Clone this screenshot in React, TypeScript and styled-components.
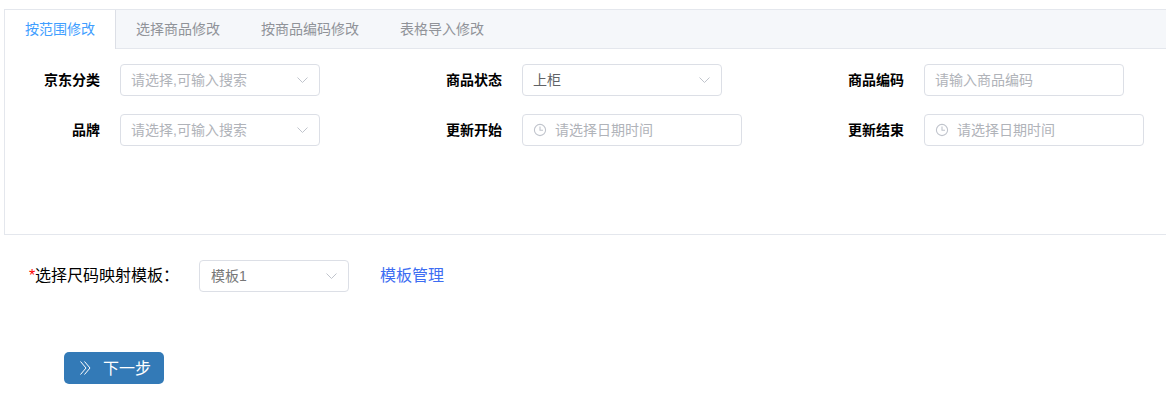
import styled, { createGlobalStyle } from "styled-components";

const GlobalStyle = createGlobalStyle`
  html, body {
    margin: 0;
    padding: 0;
    background: #fff;
    overflow: hidden;
  }
  body {
    font-family: "Liberation Sans", "Noto Sans CJK SC", sans-serif;
    font-size: 14px;
  }
`;

const Arrow = () => (
  <ArrowIcon width="11" height="6" viewBox="0 0 11 6" fill="none" stroke="currentColor" strokeWidth="1">
    <path d="M0.5 0.5L5.5 5.5L10.5 0.5" />
  </ArrowIcon>
);

const ClockIcon = () => (
  <svg width="14" height="14" viewBox="0 0 14 14" fill="none" stroke="currentColor" strokeWidth="1.1">
    <circle cx="7" cy="7" r="5.6" />
    <path d="M7 3.6V7.2H10" />
  </svg>
);

const DoubleArrow = () => (
  <svg width="11" height="14" viewBox="0 0 11 14" fill="none" stroke="currentColor" strokeWidth="1">
    <path d="M0.5 0.5L6 7L0.5 13.5M4.5 0.5L10 7L4.5 13.5" />
  </svg>
);

const tabs = ["按范围修改", "选择商品修改", "按商品编码修改", "表格导入修改"];

const App = () => (
  <Page>
    <GlobalStyle />
    <TabCard>
      <TabHeader>
        {tabs.map((tab, index) => (
          <Tab key={tab} $active={index === 0}>
            {tab}
          </Tab>
        ))}
      </TabHeader>
      <FormGrid>
        <FormItem>
          <Label>京东分类</Label>
          <Field>
            <Placeholder>请选择,可输入搜索</Placeholder>
            <Arrow />
          </Field>
        </FormItem>
        <FormItem>
          <Label>商品状态</Label>
          <Field>
            <Value>上柜</Value>
            <Arrow />
          </Field>
        </FormItem>
        <FormItem>
          <Label>商品编码</Label>
          <Field>
            <Placeholder>请输入商品编码</Placeholder>
          </Field>
        </FormItem>
        <FormItem>
          <Label>品牌</Label>
          <Field>
            <Placeholder>请选择,可输入搜索</Placeholder>
            <Arrow />
          </Field>
        </FormItem>
        <FormItem>
          <Label>更新开始</Label>
          <Field $wide>
            <Clock>
              <ClockIcon />
            </Clock>
            <Placeholder>请选择日期时间</Placeholder>
          </Field>
        </FormItem>
        <FormItem>
          <Label>更新结束</Label>
          <Field $wide>
            <Clock>
              <ClockIcon />
            </Clock>
            <Placeholder>请选择日期时间</Placeholder>
          </Field>
        </FormItem>
      </FormGrid>
    </TabCard>
    <TemplateRow>
      <TemplateLabel>
        <Required>*</Required>选择尺码映射模板：
      </TemplateLabel>
      <TemplateField>
        <TemplateValue>模板1</TemplateValue>
        <Arrow />
      </TemplateField>
      <TemplateLink>模板管理</TemplateLink>
    </TemplateRow>
    <NextButton>
      <DoubleArrow />
      <span>下一步</span>
    </NextButton>
  </Page>
);

export default App;

const Page = styled.div`
  width: 1166px;
  height: 400px;
  padding-top: 9px;
  box-sizing: border-box;
  overflow: hidden;
`;

const TabCard = styled.div`
  width: 1170px;
  height: 226px;
  margin-left: 4px;
  box-sizing: border-box;
  border: 1px solid #e4e7ed;
`;

const TabHeader = styled.div`
  display: flex;
  height: 39px;
  box-sizing: border-box;
  background: #f5f7fa;
  border-bottom: 1px solid #e4e7ed;
`;

const Tab = styled.div<{ $active?: boolean }>`
  height: 39px;
  box-sizing: border-box;
  padding: 0 20px;
  line-height: 39px;
  font-size: 14px;
  color: ${({ $active }) => ($active ? "#409eff" : "#909399")};
  background: ${({ $active }) => ($active ? "#fff" : "transparent")};
  border-right: 1px solid ${({ $active }) => ($active ? "#dcdfe6" : "transparent")};
`;

const FormGrid = styled.div`
  display: grid;
  grid-template-columns: repeat(3, 402px);
  row-gap: 18px;
  padding: 15px 0 0 15px;
`;

const FormItem = styled.div`
  display: flex;
  align-items: center;
  height: 32px;
`;

const Label = styled.label`
  width: 80px;
  padding-right: 20px;
  padding-bottom: 2px;
  text-align: right;
  font-size: 14px;
  font-weight: 700;
  color: #000;
`;

const Field = styled.div<{ $wide?: boolean }>`
  display: flex;
  align-items: center;
  width: ${({ $wide }) => ($wide ? "220px" : "200px")};
  height: 32px;
  box-sizing: border-box;
  padding: 0 11px 0 10px;
  background: #fff;
  border: 1px solid #dcdfe6;
  border-radius: 4px;
`;

const Placeholder = styled.span`
  flex: 1;
  padding-bottom: 2px;
  color: #b0b3b9;
  font-size: 14px;
`;

const Value = styled.span`
  flex: 1;
  padding-bottom: 2px;
  color: #606266;
  font-size: 14px;
`;

const ArrowIcon = styled.svg`
  color: #c0c4cc;
  flex: none;
`;

const Clock = styled.span`
  display: flex;
  margin-right: 8px;
  color: #c0c4cc;
`;

const TemplateRow = styled.div`
  display: flex;
  align-items: center;
  height: 32px;
  margin-top: 25px;
  padding-left: 28px;
`;

const TemplateLabel = styled.span`
  width: 171px;
  padding-bottom: 4px;
  font-size: 16px;
  color: #000;
  white-space: nowrap;
`;

const Required = styled.span`
  display: inline-block;
  width: 7px;
  padding-left: 1px;
  box-sizing: border-box;
  color: #f00;
`;

const TemplateField = styled(Field)`
  width: 150px;
`;

const TemplateValue = styled(Value)`
  padding-left: 1px;
  color: #777;
`;

const TemplateLink = styled.a`
  margin-left: 31px;
  padding-bottom: 4px;
  font-size: 16px;
  color: #3d6df2;
`;

const NextButton = styled.button`
  display: flex;
  align-items: center;
  width: 100px;
  height: 32px;
  margin: 60px 0 0 64px;
  padding: 0 0 0 16px;
  box-sizing: border-box;
  background: #337ab7;
  border: none;
  border-radius: 5px;
  color: #fff;
  font-family: inherit;
  font-size: 16px;

  span {
    margin-left: 12px;
    padding-bottom: 2px;
  }
`;
